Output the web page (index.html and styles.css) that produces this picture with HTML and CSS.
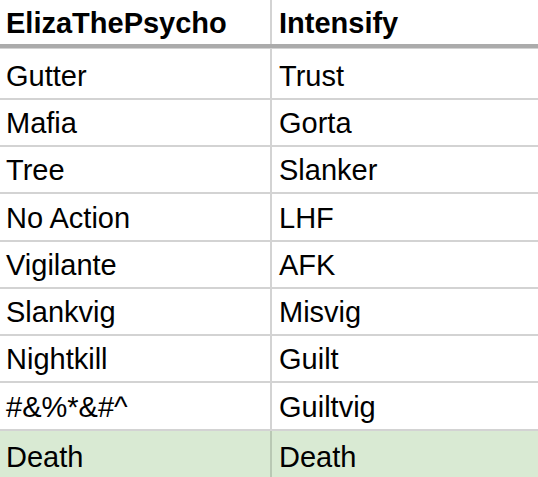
FILE: index.html
```html
<!DOCTYPE html>
<html>
<head>
<meta charset="utf-8">
<link rel="stylesheet" href="styles.css">
</head>
<body>
<div class="sheet">
  <div class="row head">
    <div class="cell">ElizaThePsycho</div>
    <div class="cell">Intensify</div>
  </div>
  <div class="row first">
    <div class="cell">Gutter</div>
    <div class="cell">Trust</div>
  </div>
  <div class="row">
    <div class="cell">Mafia</div>
    <div class="cell">Gorta</div>
  </div>
  <div class="row">
    <div class="cell">Tree</div>
    <div class="cell">Slanker</div>
  </div>
  <div class="row">
    <div class="cell">No Action</div>
    <div class="cell">LHF</div>
  </div>
  <div class="row">
    <div class="cell">Vigilante</div>
    <div class="cell">AFK</div>
  </div>
  <div class="row">
    <div class="cell">Slankvig</div>
    <div class="cell">Misvig</div>
  </div>
  <div class="row">
    <div class="cell">Nightkill</div>
    <div class="cell">Guilt</div>
  </div>
  <div class="row">
    <div class="cell">#&amp;%*&amp;#^</div>
    <div class="cell">Guiltvig</div>
  </div>
  <div class="row last">
    <div class="cell">Death</div>
    <div class="cell">Death</div>
  </div>
</div>
</body>
</html>
```
FILE: styles.css
```css
html, body {
  margin: 0;
  padding: 0;
  background: #ffffff;
}
.sheet {
  width: 538px;
  height: 477px;
  overflow: hidden;
  font-family: "Liberation Sans", Arial, sans-serif;
  font-size: 29px;
  line-height: 33px;
  color: #000;
}
.row {
  display: grid;
  grid-template-columns: 270px 1fr;
  height: 47.3px;
  box-sizing: border-box;
  border-bottom: 2px solid #d3d3d3;
}
.cell {
  display: flex;
  align-items: flex-end;
  padding: 0 0 5px 6px;
  white-space: nowrap;
}
.cell + .cell {
  border-left: 2px solid #d3d3d3;
  padding-left: 7px;
}
.head {
  height: 48px;
  border-bottom: 4px solid #ababab;
  font-weight: bold;
}
.head .cell {
  padding-bottom: 4px;
}
.first {
  height: 51.7px;
  border-top: 1px solid #d3d3d3;
}
.last {
  height: 47px;
  border-bottom: none;
  background: #d9ead3;
}
.last .cell {
  padding-bottom: 4px;
}
.last .cell + .cell {
  border-left-color: #b9c8b4;
}
```
